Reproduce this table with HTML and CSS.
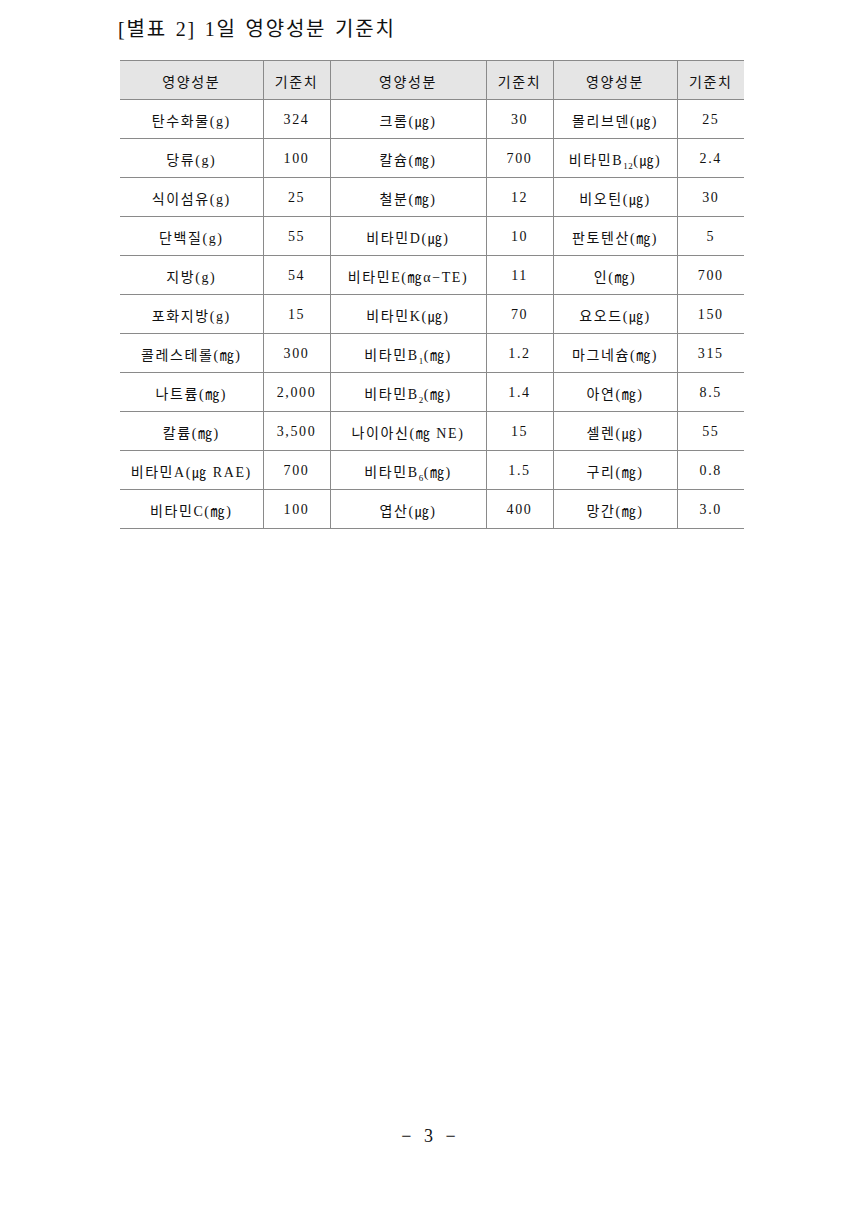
FILE: index.html
```html
<!DOCTYPE html>
<html lang="ko">
<head>
<meta charset="utf-8">
<link rel="stylesheet" href="styles.css">
</head>
<body>
<div class="page">
  <h1 class="title">[별표 2] 1일 영양성분 기준치</h1>
  <table class="nt">
    <colgroup>
      <col class="c1"><col class="c2"><col class="c3"><col class="c4"><col class="c5"><col class="c6">
    </colgroup>
    <thead>
      <tr><th>영양성분</th><th>기준치</th><th>영양성분</th><th>기준치</th><th>영양성분</th><th>기준치</th></tr>
    </thead>
    <tbody>
      <tr><td>탄수화물(g)</td><td>324</td><td>크롬(㎍)</td><td>30</td><td>몰리브덴(㎍)</td><td>25</td></tr>
      <tr><td>당류(g)</td><td>100</td><td>칼슘(㎎)</td><td>700</td><td>비타민B<sub>12</sub>(㎍)</td><td>2.4</td></tr>
      <tr><td>식이섬유(g)</td><td>25</td><td>철분(㎎)</td><td>12</td><td>비오틴(㎍)</td><td>30</td></tr>
      <tr><td>단백질(g)</td><td>55</td><td>비타민D(㎍)</td><td>10</td><td>판토텐산(㎎)</td><td>5</td></tr>
      <tr><td>지방(g)</td><td>54</td><td>비타민E(㎎α−TE)</td><td>11</td><td>인(㎎)</td><td>700</td></tr>
      <tr><td>포화지방(g)</td><td>15</td><td>비타민K(㎍)</td><td>70</td><td>요오드(㎍)</td><td>150</td></tr>
      <tr><td>콜레스테롤(㎎)</td><td>300</td><td>비타민B<sub>1</sub>(㎎)</td><td>1.2</td><td>마그네슘(㎎)</td><td>315</td></tr>
      <tr><td>나트륨(㎎)</td><td>2,000</td><td>비타민B<sub>2</sub>(㎎)</td><td>1.4</td><td>아연(㎎)</td><td>8.5</td></tr>
      <tr><td>칼륨(㎎)</td><td>3,500</td><td>나이아신(㎎ NE)</td><td>15</td><td>셀렌(㎍)</td><td>55</td></tr>
      <tr><td>비타민A(㎍ RAE)</td><td>700</td><td>비타민B<sub>6</sub>(㎎)</td><td>1.5</td><td>구리(㎎)</td><td>0.8</td></tr>
      <tr><td>비타민C(㎎)</td><td>100</td><td>엽산(㎍)</td><td>400</td><td>망간(㎎)</td><td>3.0</td></tr>
    </tbody>
  </table>
  <div class="spacer"></div>
  <div class="pageno">− 3 −</div>
</div>
</body>
</html>
```

FILE: styles.css
```css
html, body {
  margin: 0;
  padding: 0;
  background: #ffffff;
}
body {
  font-family: "Liberation Serif", "Noto Sans CJK KR", serif;
  color: #111111;
}
.page {
  width: 860px;
  height: 1214px;
  display: flex;
  flex-direction: column;
  box-sizing: border-box;
  padding-top: 16px;
}
.title {
  margin: 0 0 0 118px;
  font-size: 20px;
  font-weight: normal;
  line-height: 26px;
  letter-spacing: 1.8px;
  word-spacing: 2px;
  color: #111111;
}
.nt {
  margin: 18px 0 0 120px;
  width: 624px;
  border-collapse: collapse;
  table-layout: fixed;
  font-size: 14px;
  letter-spacing: 1.6px;
}
.c1 { width: 143px; }
.c2 { width: 67px; }
.c3 { width: 156px; }
.c4 { width: 67px; }
.c5 { width: 124px; }
.c6 { width: 67px; }
.nt th, .nt td {
  height: 37px;
  padding: 1px 0 0 0;
  text-align: center;
  vertical-align: middle;
  border: 1px solid #8a8a8a;
  font-weight: normal;
  white-space: nowrap;
}
.nt th {
  background: #e5e5e5;
}
.nt tr > :first-child { border-left: none; }
.nt tr > :last-child { border-right: none; }
.nt sub {
  font-size: 9px;
  line-height: 0;
  letter-spacing: 0.5px;
}
.spacer { flex: 1; }
.pageno {
  text-align: center;
  font-size: 18px;
  letter-spacing: 3px;
  word-spacing: 2px;
  margin-bottom: 67px;
  font-family: "Liberation Serif", serif;
}
```
